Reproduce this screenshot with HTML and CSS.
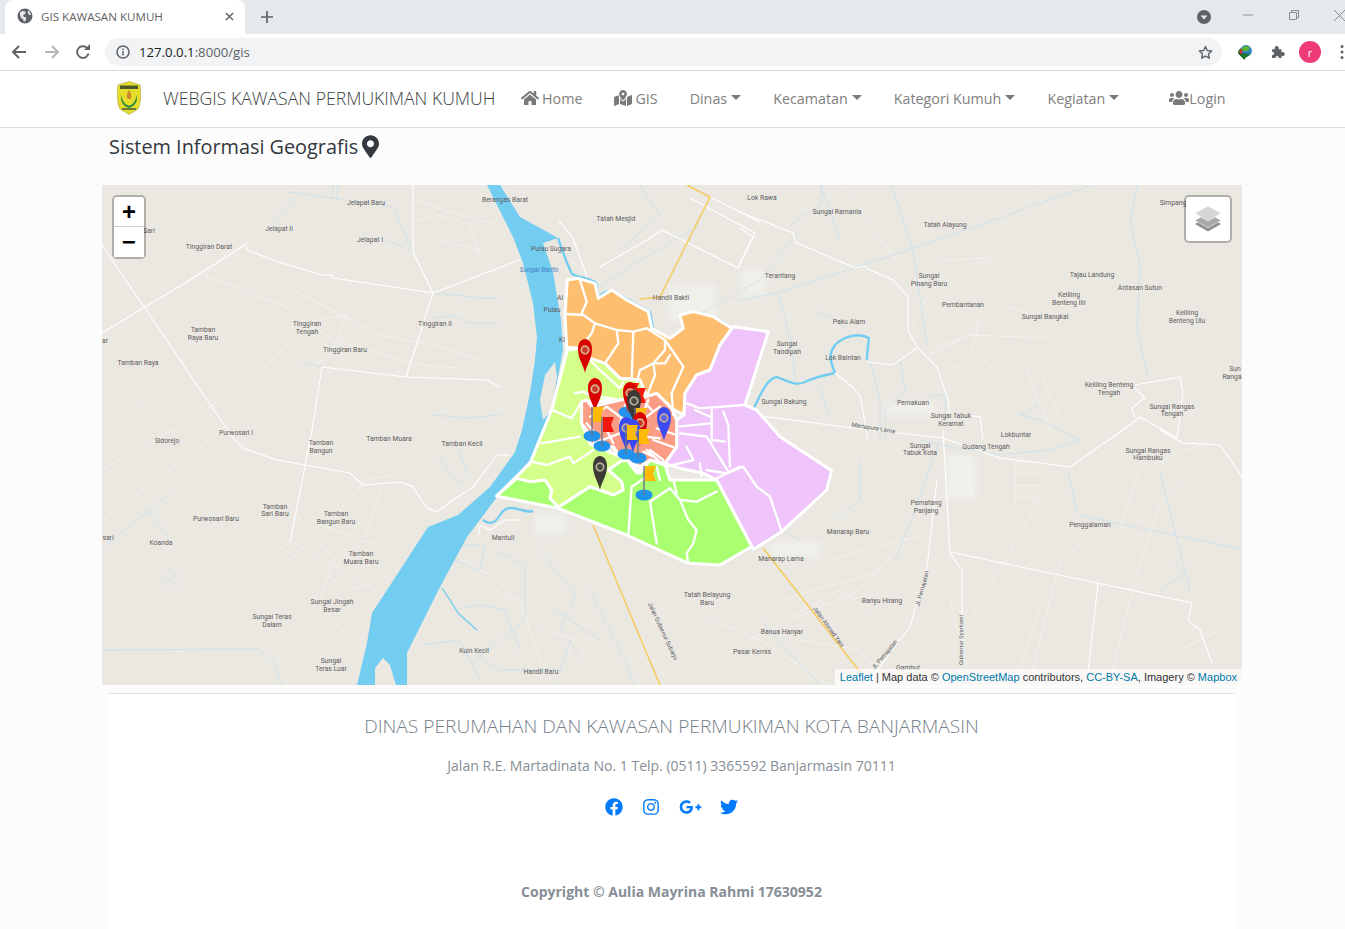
FILE: index.html
```html
<!DOCTYPE html>
<html lang="id">
<head>
<meta charset="utf-8">
<title>GIS KAWASAN KUMUH</title>
<link rel="stylesheet" href="styles.css">
</head>
<body>
<header class="chrome">
  <div class="tabstrip">
    <div class="tab">
      <svg class="favicon" viewBox="0 0 16 16"><circle cx="8" cy="8" r="7.5" fill="#5f6368"/><path d="M3 4l3-1 3 1-1 2-2 1 1 2 2 0 0 3-2 2-1-3-2-1-1-3zM11 2l2 2 1 3-2 0-1-2z" fill="#e6e9ec"/></svg>
      <span class="tab-title">GIS KAWASAN KUMUH</span>
      <svg class="tab-close" viewBox="0 0 10 10"><path d="M1 1l8 8M9 1l-8 8" stroke="#5f6368" stroke-width="1.6"/></svg>
    </div>
    <svg class="newtab" viewBox="0 0 12 12"><path d="M6 0v12M0 6h12" stroke="#5f6368" stroke-width="1.7"/></svg>
    <svg class="tabsearch" viewBox="0 0 14 14"><circle cx="7" cy="7" r="7" fill="#5f6368"/><path d="M3.6 5.4h6.8L7 9.6z" fill="#e6e9ec"/></svg>
    <svg class="win win-min" viewBox="0 0 10 10"><path d="M0 5h10" stroke="#8a8d91" stroke-width="1"/></svg>
    <svg class="win win-max" viewBox="0 0 10 10"><path d="M2.5 2.5V.5h7v7h-2M.5 2.5h7v7h-7z" fill="none" stroke="#8a8d91" stroke-width="1"/></svg>
    <svg class="win win-close" viewBox="0 0 11 11"><path d="M0 0l11 11M11 0L0 11" stroke="#8a8d91" stroke-width="1"/></svg>
  </div>
  <div class="toolbar">
    <svg class="tool tool-back" viewBox="0 0 16 16"><path d="M15 8H2M8 2L2 8l6 6" fill="none" stroke="#5f6368" stroke-width="1.9"/></svg>
    <svg class="tool tool-fwd" viewBox="0 0 16 16"><path d="M1 8h13M8 2l6 6-6 6" fill="none" stroke="#b4b6b9" stroke-width="1.9"/></svg>
    <svg class="tool tool-reload" viewBox="0 0 16 16"><path d="M13.5 9.5A5.8 5.8 0 1 1 12 4" fill="none" stroke="#5f6368" stroke-width="1.9"/><path d="M9 6h6V0z" fill="#5f6368"/></svg>
    <div class="omnibox">
      <svg class="info" viewBox="0 0 14 14"><circle cx="7" cy="7" r="6" fill="none" stroke="#5f6368" stroke-width="1.5"/><path d="M7 6v4.4M7 3.4v1.5" stroke="#5f6368" stroke-width="1.5"/></svg>
      <span class="url"><span class="url-host">127.0.0.1</span>:8000/gis</span>
      <svg class="star" viewBox="0 0 16 16"><path d="M8 1.6l1.9 4.3 4.7.5-3.5 3.1 1 4.6L8 11.8l-4.1 2.3 1-4.6-3.5-3.1 4.7-.5z" fill="none" stroke="#5f6368" stroke-width="1.5" stroke-linejoin="round"/></svg>
    </div>
    <svg class="ext-idm" viewBox="0 0 16 16"><circle cx="8.5" cy="6.5" r="5.5" fill="#2f7fc4"/><path d="M4 5c2-3 5-4 8-2l-1 3-4 1z" fill="#5cb531"/><path d="M1 9c0-3 1.500-5 3-5l1 5 4 0-2 6z" fill="#1b5e20"/><path d="M2 7l2-3 1 3-1 3z" fill="#d8342a"/><path d="M3 10l10-1-6 5z" fill="#1d7a2a"/></svg>
    <svg class="ext-puzzle" viewBox="0 0 512 512"><path fill="#5f6368" d="M64 170h90c-14-50 6-106 62-106s76 56 62 106h90v90c50-14 106 6 106 62s-56 76-106 62v64H280c10-34-14-62-50-62s-60 28-50 62H64V354c34 10 62-14 62-50s-28-60-62-50z"/></svg>
    <span class="avatar">r</span>
    <svg class="kebab" viewBox="0 0 4 16"><circle cx="2" cy="2.500" r="1.500" fill="#5f6368"/><circle cx="2" cy="8" r="1.500" fill="#5f6368"/><circle cx="2" cy="13.500" r="1.500" fill="#5f6368"/></svg>
  </div>
</header>

<nav class="navbar">
  <svg class="logo" viewBox="0 0 24 34">
    <path d="M12 .5L23 4c1 10 1 18-2 24l-9 5.500L3 28C0 22 0 14 1 4z" fill="#e6dc2a" stroke="#a8a53a" stroke-width=".6"/>
    <rect x="3" y="4.500" width="18" height="3.500" fill="#4a5a2a"/>
    <path d="M4.500 14c-1.500 6 1 11 7.500 13 6.500-2 9-7 7.500-13-.5 6-3.500 10-7.500 10.500C8 24 5 20 4.500 14z" fill="#2a8a3c"/>
    <path d="M12 9c-2 3-3 6-1.500 9h3C15 15 14 12 12 9z" fill="#c98a2a"/>
    <rect x="5" y="27" width="14" height="2" fill="#6d7a3a"/>
  </svg>
  <span class="brand">WEBGIS KAWASAN PERMUKIMAN KUMUH</span>
  <ul class="navlist">
    <li class="navitem"><svg class="fa fa-home" viewBox="0 0 576 512"><path d="M280.37 148.26L96 300.11V464a16 16 0 0 0 16 16l112.06-.29a16 16 0 0 0 15.92-16V368a16 16 0 0 1 16-16h64a16 16 0 0 1 16 16v95.64a16 16 0 0 0 16 16.05L464 480a16 16 0 0 0 16-16V300L295.67 148.26a12.19 12.19 0 0 0-15.3 0zM571.6 251.47L488 182.56V44.05a12 12 0 0 0-12-12h-56a12 12 0 0 0-12 12v72.61L318.47 43a48 48 0 0 0-61 0L4.34 251.47a12 12 0 0 0-1.6 16.9l25.5 31A12 12 0 0 0 45.15 301l235.22-193.74a12.19 12.19 0 0 1 15.3 0L530.9 301a12 12 0 0 0 16.9-1.6l25.5-31a12 12 0 0 0-1.7-16.93z"/></svg>Home</li>
    <li class="navitem"><svg class="fa fa-home" viewBox="0 0 576 512"><path d="M288 0c-69.59 0-126 56.41-126 126 0 56.26 82.35 158.8 113.9 196.02 6.39 7.54 17.82 7.54 24.2 0C331.65 284.8 414 182.26 414 126 414 56.41 357.59 0 288 0zm0 168c-23.2 0-42-18.8-42-42s18.8-42 42-42 42 18.8 42 42-18.8 42-42 42zM20.12 215.95A32.006 32.006 0 0 0 0 245.66v250.32c0 11.32 11.43 19.06 21.94 14.86L160 448V214.92c-8.84-15.98-16.07-31.54-21.25-46.42L20.12 215.95zM288 359.67c-14.07 0-27.38-6.18-36.51-16.96-19.66-23.2-40.57-49.62-59.49-76.72v182l192 64V266c-18.92 27.09-39.82 53.52-59.49 76.72-9.13 10.77-22.44 16.95-36.51 16.95zm266.06-198.51L416 224v288l139.88-55.95A31.996 31.996 0 0 0 576 426.34V176.02c0-11.32-11.43-19.06-21.94-14.86z"/></svg>GIS</li>
    <li class="navitem">Dinas<span class="caret"></span></li>
    <li class="navitem">Kecamatan<span class="caret"></span></li>
    <li class="navitem">Kategori Kumuh<span class="caret"></span></li>
    <li class="navitem">Kegiatan<span class="caret"></span></li>
    <li class="navitem navlogin"><svg class="fa fa-users" viewBox="0 0 640 512"><path d="M96 224c35.3 0 64-28.7 64-64s-28.7-64-64-64-64 28.7-64 64 28.7 64 64 64zm448 0c35.3 0 64-28.7 64-64s-28.7-64-64-64-64 28.7-64 64 28.7 64 64 64zm32 32h-64c-17.6 0-33.5 7.1-45.1 18.6 40.3 22.1 68.9 62 75.1 109.4h66c17.7 0 32-14.3 32-32v-32c0-35.3-28.7-64-64-64zm-256 0c61.9 0 112-50.1 112-112S381.9 32 320 32 208 82.1 208 144s50.1 112 112 112zm76.8 32h-8.3c-20.8 10-43.9 16-68.5 16s-47.6-6-68.5-16h-8.3C179.6 288 128 339.6 128 403.2V432c0 26.5 21.5 48 48 48h288c26.5 0 48-21.5 48-48v-28.8c0-63.6-51.6-115.2-115.2-115.2zm-223.7-13.4C161.5 263.1 145.6 256 128 256H64c-35.3 0-64 28.7-64 64v32c0 17.7 14.3 32 32 32h65.9c6.3-47.4 34.9-87.3 75.2-109.4z"/></svg>Login</li>
  </ul>
</nav>

<main class="main">
  <h1 class="title">Sistem Informasi Geografis<svg class="title-pin" viewBox="0 0 384 512"><path d="M172.268 501.67C26.97 291.031 0 262.577 0 192 0 85.961 85.961 0 192 0s192 85.961 192 192c0 70.577-26.97 99.031-172.268 309.67-9.535 13.774-29.93 13.773-39.464 0zM192 272c44.183 0 80-35.817 80-80s-35.817-80-80-80-80 35.817-80 80 35.817 80 80 80z"/></svg></h1>

  <section class="map">
    <svg class="map-svg" viewBox="102 185 1140 500">
      <defs>
        <g id="pin-red"><path d="M0 34C-1.500 26-7 20-7 10-7 3.500-3.500 0 0 0S7 3.500 7 10C7 20 1.500 26 0 34Z" fill="#d90000"/><circle cy="11" r="3.800" fill="#c93a2c" stroke="#d8b088" stroke-width="1.800"/></g>
        <g id="pin-blue"><path d="M0 34C-1.500 26-7 20-7 10-7 3.500-3.500 0 0 0S7 3.500 7 10C7 20 1.500 26 0 34Z" fill="#3a4af0"/><circle cy="11" r="3.800" fill="#5a66e0" stroke="#c2a8a0" stroke-width="1.800"/></g>
        <g id="pin-dark"><path d="M0 34C-1.500 26-7 20-7 10-7 3.500-3.500 0 0 0S7 3.500 7 10C7 20 1.500 26 0 34Z" fill="#3c3a34"/><circle cy="11" r="3.800" fill="#4a4840" stroke="#b0aca2" stroke-width="1.800"/></g>
        <g id="flag-y"><ellipse cy="29" rx="8.500" ry="5.500" fill="#2293ec"/><path d="M1 0h11l-3 7.500 3 7.500H1z" fill="#fdbb07"/><path d="M0 0v29" stroke="#6b7480" stroke-width="1.400"/></g>
        <g id="flag-r"><ellipse cy="29" rx="8.500" ry="5.500" fill="#2293ec"/><path d="M1 0h11l-3 7.500 3 7.500H1z" fill="#f4190e"/><path d="M0 0v29" stroke="#6b7480" stroke-width="1.400"/></g>
      </defs>

      <g class="base">
      <g class="faint">
        <polyline points="102,430 145,400 182,363 200,345"/><polyline points="102,470 190,420 250,380 315,320 347,315"/><polyline points="102,520 170,470 240,415 330,355 347,315"/>
        <polyline points="205,275 230,250 245,245 253,238"/>
        <polyline points="203,275 283,305 333,340 420,365 460,368"/><polyline points="293,290 380,335 433,345 480,360"/>
        <polyline points="413,222 440,215 470,225 480,260"/><polyline points="413,200 460,215 500,225"/><polyline points="440,240 480,250 500,278"/>
        <polyline points="284,500 335,560 320,600 340,630 370,650 385,665"/><polyline points="277,545 350,590 370,585"/><polyline points="280,535 375,590"/><polyline points="180,560 210,530 250,470"/><polyline points="132,600 160,640 190,660"/>
        <polyline points="310,520 360,540 378,545"/><polyline points="365,535 380,490 370,480"/><polyline points="333,520 365,480 395,475"/>
        <polyline points="460,560 500,580 520,610 540,630 580,640"/><polyline points="495,590 520,600 540,660 560,685"/>
        <polyline points="700,615 760,640 830,685"/><polyline points="670,685 640,640 660,610"/><polyline points="780,600 850,580 880,570"/><polyline points="830,560 900,540 930,535"/><polyline points="790,620 860,590 905,540"/>
        <polyline points="750,640 840,590 880,620"/><polyline points="800,640 860,650 875,670"/>
        <polyline points="970,620 1040,500 1060,470"/><polyline points="1030,680 1060,560 1100,530"/><polyline points="1110,680 1130,600 1160,500 1200,470"/><polyline points="1120,530 1140,470 1210,440"/>
        <polyline points="970,680 950,600"/><polyline points="1020,670 1040,610"/><polyline points="1180,650 1220,630"/>
        <polyline points="920,285 940,260 990,258 930,290 910,330"/><polyline points="930,350 970,335 1050,338"/><polyline points="970,355 980,320 960,340 930,355"/><polyline points="1006,305 1040,320"/>
        <polyline points="950,370 970,360 985,360 1000,375"/><polyline points="1025,365 1050,430"/><polyline points="1042,375 1060,420"/>
        <polyline points="845,185 880,240 898,262"/><polyline points="1030,185 1050,210"/>
      </g>
      <g class="tints">
        <rect x="947" y="456" width="28" height="42"/><rect x="668" y="285" width="48" height="36"/><rect x="770" y="542" width="50" height="16"/><rect x="535" y="512" width="32" height="22"/><rect x="885" y="402" width="50" height="14"/><rect x="740" y="270" width="26" height="26"/>
      </g>
      <g class="grid">
        <path d="M948 458h30M948 466h30M948 474h30M948 482h30M948 490h30M955 458v40M963 458v40M971 458v40M1015 462h25M1015 474h25M1015 486h25M1015 498h25M1015 462v40"/>
      </g>

      <g class="thin">
        <polyline points="288,192 347,200 393,207 413,252"/><polyline points="300,193 270,225"/><polyline points="333,185 333,198"/><polyline points="338,185 337,198"/><polyline points="383,238 413,252"/>
        <polyline points="433,293 480,298 500,298"/><polyline points="433,318 453,316 467,323 500,323"/><polyline points="302,362 322,367"/><polyline points="433,415 467,418 500,415"/>
        <polyline points="102,650 257,649 273,660 282,685"/><polyline points="102,548 172,492"/><polyline points="148,510 168,537"/><polyline points="167,568 179,577"/><polyline points="163,575 179,587"/><polyline points="160,580 170,587"/>
        <polyline points="437,455 458,483 467,473 457,447"/>
        <polyline points="441,555 480,570 485,545 460,545"/><polyline points="495,550 525,565 525,620 500,640 475,660"/><polyline points="450,610 480,605 505,610 520,650"/><polyline points="420,645 460,640 480,680"/><polyline points="470,650 500,670 560,670 570,640 580,660"/>
        <polyline points="540,550 575,595 560,630"/><polyline points="590,590 620,650 635,685"/><polyline points="555,610 600,640"/>
        <polyline points="1137,185 1130,223 1140,263 1137,330 1148,377"/><polyline points="1092,185 900,253 778,293"/><polyline points="892,185 913,250 927,347"/>
        <polyline points="1077,515 1242,549"/><polyline points="1068,472 1077,513"/><polyline points="1160,473 1190,590"/><polyline points="1175,560 1183,575 1160,590"/>
        <polyline points="778,293 792,345 795,382"/><polyline points="740,300 778,293"/><polyline points="822,185 820,205 790,225"/><polyline points="815,310 835,320 870,350"/>
        <polyline points="800,375 820,390 830,420"/><polyline points="870,360 880,400 880,440"/><polyline points="900,360 905,390 885,410 885,440"/><polyline points="930,395 945,395 945,420"/><polyline points="940,440 915,510 895,560"/>
        <polyline points="920,440 940,445 1000,455 1050,450 1080,440 1040,420 1020,415 1040,405"/>
        <polyline points="860,460 860,500 835,520"/><polyline points="740,480 760,520 800,540"/><polyline points="760,620 820,685"/>
        <polyline points="640,185 660,215 620,250"/><polyline points="700,225 640,260 580,300"/><polyline points="820,185 840,240"/><polyline points="690,320 760,280 800,230"/>
      </g>

      <polygon class="water" points="487,185 513,237 523,263 533,303 537,337 535,360 530,393 522,430 515,452 490,487 458,515 428,527 372,613 367,643 357,685 375,685 375,668 383,658 390,665 396,685 407,685 407,653 440,587 467,537 497,497 530,460 547,430 552,410 563,350 561,320 553,272 543,243 558,238 520,217 500,185"/>
      <polygon class="land" points="555,362 545,375 540,400 543,420 552,410 557,377"/>
      <path class="water-river" d="M558 238C562 250 566 262 572 274C580 278 590 278 596 283L598 297C604 292 608 290 614 292L650 312L653 328"/>
      <path class="water-river" d="M753 410C760 395 768 377 777 377C790 382 795 386 805 382C815 377 825 375 835 373C830 360 828 355 835 345C845 335 860 333 869 338C868 345 867 352 867 360"/>
      <path class="water-river" d="M483 520C490 526 496 522 500 515C506 505 515 508 522 510C528 512 530 512 533 511"/>
      <polyline class="water-thin" points="442,588 450,600 458,613 477,630"/>

      <g class="road">
        <polyline points="413,185 413,252 433,293 406,377"/>
        <polyline points="245,245 248,250 272,260 322,275 332,275 333,278 433,293"/>
        <polyline points="245,245 182,285 145,307 102,333"/>
        <polyline points="102,245 233,438 243,448 277,460 350,473 363,485 400,482 413,487 427,508 437,512 453,500 473,487 497,455 510,455"/>
        <polyline points="322,367 312,430 290,543"/>
        <polyline points="322,367 406,377 487,380 500,387"/>
        <polyline points="433,293 480,275 520,260"/>
        <polyline points="740,212 793,233 795,242 855,268 865,266 870,270 893,280 908,297 908,330 917,347 937,367 948,400 950,413 980,417 983,440"/>
        <polyline points="740,228 753,237 740,263"/>
        <polyline points="710,197 760,222"/>
        <polyline points="662,230 738,268 755,233 690,198"/>
        <polyline points="558,220 573,238 587,277"/>
        <polyline points="600,267 647,240 662,230"/>
        <polyline points="753,415 853,428 943,438 1000,458 1070,467 1123,430 1140,417 1177,438"/>
        <polyline points="1160,430 1183,443 1220,445 1242,477"/>
        <polyline points="1135,385 1180,377 1183,393 1177,438"/>
        <polyline points="1135,388 1145,398 1132,408 1135,418"/>
        <polyline points="867,362 893,365 917,348"/>
        <polyline points="835,373 850,385 860,395 868,440"/>
        <polyline points="943,430 950,553 962,570 962,663"/>
        <polyline points="950,552 1192,603 1188,620 1200,630 1212,663"/>
        <polyline points="1098,583 1088,673"/>
        <polyline points="937,480 927,567 910,627 897,643 867,685"/>
        <polyline points="480,525 490,530 505,520 520,520"/>
        <polyline points="478,537 480,526"/>
      </g>
      <g class="highway">
        <polyline points="687,185 710,197 660,297 640,299"/>
        <polyline points="593,525 660,685"/>
        <polyline points="763,548 860,672"/>
      </g>
      </g>

      <g transform="translate(480 260) scale(.33333)">
        <g class="districts">
          <polygon class="d-orange" points="262,60 295,55 345,70 355,115 395,90 440,120 505,155 515,205 570,235 610,205 600,165 640,155 700,170 755,205 720,255 690,330 650,345 615,400 612,465 575,445 530,400 500,410 480,360 420,355 375,310 330,295 300,265 260,262 255,165"/>
          <polygon class="d-purple" points="760,200 865,215 795,435 830,450 900,530 1055,632 1040,690 905,815 820,868 710,660 670,640 600,625 555,610 590,560 590,480 612,465 615,400 650,345 690,330 720,255"/>
          <polygon class="d-light" points="262,270 300,265 330,295 375,310 420,355 480,360 500,410 420,420 305,425 305,490 330,550 420,590 440,600 480,640 430,690 400,705 330,680 235,742 50,708 150,610 215,450"/>
          <polygon class="d-green" points="50,708 110,655 150,665 195,660 215,690 210,715 235,742 330,680 400,705 430,690 425,665 385,630 420,605 440,600 480,640 510,600 555,615 570,660 710,660 815,860 720,915 625,910 440,825 235,745"/>
          <polygon class="d-coral" points="305,425 320,420 335,440 420,420 500,410 530,400 575,445 590,480 590,560 555,610 510,600 480,620 440,600 420,590 400,560 345,560 330,550 320,510 305,490"/>
        </g>
        <g class="dlines">
          <polyline points="300,60 320,125 305,160"/>
          <polyline points="258,162 310,165 345,190 410,210 460,215 500,205"/>
          <polyline points="345,190 335,220 300,265"/>
          <polyline points="410,210 415,250 375,310"/>
          <polyline points="460,215 455,360"/>
          <polyline points="500,205 555,240 555,270 520,310 480,330 470,370"/>
          <polyline points="555,240 610,320 575,400 580,465"/>
          <polyline points="570,285 555,310 525,310"/>
          <polyline points="520,310 525,345 500,410"/>
          <polyline points="222,452 275,475 305,425"/>
          <polyline points="185,550 300,530"/>
          <polyline points="155,605 200,615 270,590 280,610 340,570"/>
          <polyline points="110,655 150,665 195,660 215,690 210,715 235,742"/>
          <polyline points="235,742 330,680 400,705 430,690 425,665 385,630 420,605"/>
          <polyline points="330,300 360,330 420,385 430,365"/>
          <polyline points="285,400 310,395 330,405 420,420"/>
          <polyline points="445,825 455,680 500,650"/>
          <polyline points="510,725 530,850"/>
          <polyline points="510,725 570,685 600,720 625,780 650,810 640,850 620,880 625,910"/>
          <polyline points="600,720 650,725 710,695"/>
          <polyline points="580,660 590,700"/>
          <polyline points="440,600 470,640 490,610"/>
          <polyline points="540,660 530,620"/>
          <polyline points="620,430 660,445 790,435"/>
          <polyline points="590,500 695,490"/>
          <polyline points="695,450 695,540 735,545"/>
          <polyline points="730,455 745,495 750,620"/>
          <polyline points="645,450 690,470"/>
          <polyline points="600,520 680,530 745,635"/>
          <polyline points="620,560 640,600 560,620"/>
          <polyline points="660,610 665,650"/>
          <polyline points="680,630 740,640 790,620 830,680 870,710 905,815"/>
          <polyline points="700,660 780,620"/>
          <polyline points="510,570 550,600"/>
          <polyline points="520,540 590,565"/>
          <polyline points="530,505 590,525"/>
          <polyline points="500,470 540,440"/>
          <polyline points="340,550 420,520"/>
          <polyline points="420,470 380,440 330,470"/>
          <polyline points="500,570 545,610"/>
          <polyline points="440,420 420,490"/>
          <polyline points="470,400 515,450"/>
          <polyline points="505,420 490,460"/>
          <polyline points="375,500 400,550"/>
          <polyline points="320,490 345,520"/>
          <polyline points="495,530 540,535"/>
          <polyline points="520,590 490,575"/>
        </g>
      </g>

      <use href="#flag-r" transform="translate(627 383)"/>
      <use href="#pin-red" transform="translate(630 382)"/>
      <use href="#flag-r" transform="translate(634 388)"/>
      <use href="#pin-dark" transform="translate(634 390)"/>
      <use href="#flag-y" transform="translate(635 408)"/>
      <use href="#pin-red" transform="translate(640 412)"/>
      <use href="#pin-red" transform="translate(585 339)"/>
      <use href="#pin-red" transform="translate(595 378)"/>
      <use href="#flag-y" transform="translate(592 407)"/>
      <use href="#flag-r" transform="translate(602 417)"/>
      <use href="#pin-blue" transform="translate(633 419)"/>
      <use href="#pin-blue" transform="translate(626 417)"/>
      <use href="#flag-y" transform="translate(626 425)"/>
      <use href="#flag-y" transform="translate(638 429)"/>
      <use href="#pin-blue" transform="translate(664 407)"/>
      <use href="#pin-dark" transform="translate(600 456)"/>
      <use href="#flag-y" transform="translate(644 466)"/>

      <g class="labels">
        <text x="366" y="205">Jelapat Baru</text><text x="279" y="231">Jelapat Ii</text><text x="370" y="242">Jelapat I</text><text x="209" y="249">Tinggiran Darat</text><text x="149" y="233">Sari</text>
        <text x="203" y="332">Tamban</text><text x="203" y="340">Raya Baru</text><text x="307" y="326">Tinggiran</text><text x="307" y="334">Tengah</text><text x="435" y="326">Tinggiran II</text><text x="345" y="352">Tinggiran Baru</text><text x="138" y="365">Tamban Raya</text><text x="105" y="343">ar</text>
        <text x="167" y="443">Sidorejo</text><text x="236" y="435">Purwosari I</text><text x="321" y="445">Tamban</text><text x="321" y="453">Bangun</text><text x="389" y="441">Tamban Muara</text><text x="462" y="446">Tamban Kecil</text>
        <text x="275" y="509">Tamban</text><text x="275" y="516">Sari Baru</text><text x="336" y="516">Tamban</text><text x="336" y="524">Bangun Baru</text><text x="216" y="521">Purwosari Baru</text><text x="161" y="545">Koanda</text><text x="108" y="540">sari</text>
        <text x="361" y="556">Tamban</text><text x="361" y="564">Muara Baru</text><text x="332" y="604">Sungai Jingah</text><text x="332" y="612">Besar</text><text x="272" y="619">Sungai Teras</text><text x="272" y="627">Dalam</text><text x="331" y="663">Sungai</text><text x="331" y="671">Teras Luar</text>
        <text x="503" y="540">Mantuil</text><text x="474" y="653">Kuin Kecil</text><text x="541" y="674">Handil Baru</text><text x="505" y="202">Berangas Barat</text><text x="616" y="221">Tatah Mesjid</text><text x="551" y="251">Pulau Sugara</text><text class="lbl-water" x="539" y="272">Sungai Barito</text>
        <text x="671" y="300">Handil Bakti</text><text x="552" y="312">Pulau</text><text x="560" y="300">Al</text><text x="562" y="342">Ki</text>
        <text x="780" y="278">Terantang</text><text x="762" y="200">Lok Rawa</text><text x="837" y="214">Sungai Ramania</text><text x="945" y="227">Tatah Alayung</text><text x="929" y="278">Sungai</text><text x="929" y="286">Pinang Baru</text><text x="963" y="307">Pembantanan</text><text x="849" y="324">Paku Alam</text>
        <text x="787" y="346">Sungai</text><text x="787" y="354">Tandipah</text><text x="843" y="360">Lok Baintan</text><text x="784" y="404">Sungai Bakung</text><text x="913" y="405">Pemakuan</text><text x="951" y="418">Sungai Tabuk</text><text x="951" y="426">Keramat</text>
        <text x="1092" y="277">Tajau Landung</text><text x="1140" y="290">Antasan Sutun</text><text x="1069" y="297">Keliling</text><text x="1069" y="305">Benteng Ilir</text><text x="1045" y="319">Sungai Bangkal</text><text x="1187" y="315">Keliling</text><text x="1187" y="323">Benteng Ulu</text>
        <text x="1109" y="387">Keliling Benteng</text><text x="1109" y="395">Tengah</text><text x="1172" y="409">Sungai Rangas</text><text x="1172" y="416">Tengah</text><text x="1235" y="371">Sun</text><text x="1232" y="379">Ranga</text><text x="1173" y="205">Simpang</text>
        <text x="1016" y="437">Lokbuntar</text><text x="986" y="449">Gudang Tengah</text><text x="920" y="448">Sungai</text><text x="920" y="455">Tabuk Kota</text><text x="1148" y="453">Sungai Rangas</text><text x="1148" y="460">Hambuku</text>
        <text x="926" y="505">Pematang</text><text x="926" y="513">Panjang</text><text x="848" y="534">Manarap Baru</text><text x="1090" y="527">Penggalaman</text><text x="781" y="561">Manarap Lama</text><text x="882" y="603">Banyu Hirang</text><text x="782" y="634">Banua Hanyar</text><text x="752" y="654">Pasar Kemis</text>
        <text x="707" y="597">Tatah Belayung</text><text x="707" y="605">Baru</text><text x="908" y="670">Gambut</text>
        <text class="lbl-road" transform="translate(873 430) rotate(9)">Martapura Lama</text>
        <text class="lbl-road" transform="translate(924 589) rotate(-75)">Jl. Pemajatan</text>
        <text class="lbl-road" transform="translate(886 656) rotate(-50)">Jl. Pemajatan</text>
        <text class="lbl-road" transform="translate(963 640) rotate(-90)">Gubernur Syarkawi</text>
        <text class="lbl-road" transform="translate(827 628) rotate(54)">Jalan Ahmad Yani</text>
        <text class="lbl-road" transform="translate(661 632) rotate(65)">Jalan Gubernur Subarjo</text>
      </g>
    </svg>

    <div class="zoom-ctl">
      <span class="zoom-btn zoom-in">+</span>
      <span class="zoom-btn">&#8722;</span>
    </div>
    <div class="layers-ctl">
      <svg class="layers-icon" viewBox="0 0 26 26">
        <path d="M13 10.500l13 7.500-13 7.500L0 18z" fill="#8f8f8f"/>
        <path d="M13 7l13 7.500L13 22 0 14.500z" fill="#a8a8a8" stroke="#f5f5f5" stroke-width=".6"/>
        <path d="M13 0l13 7.500L13 15 0 7.500z" fill="#d6d6d6" stroke="#f5f5f5" stroke-width=".6"/>
      </svg>
    </div>
    <div class="attrib"><a class="link">Leaflet</a> | Map data © <a class="link">OpenStreetMap</a> contributors, <a class="link">CC-BY-SA</a>, Imagery © <a class="link">Mapbox</a></div>
  </section>

  <footer class="footer">
    <h2 class="foot-title">DINAS PERUMAHAN DAN KAWASAN PERMUKIMAN KOTA BANJARMASIN</h2>
    <p class="foot-addr">Jalan R.E. Martadinata No. 1 Telp. (0511) 3365592 Banjarmasin 70111</p>
    <div class="socials">
      <svg class="soc soc-fb" viewBox="0 0 512 512"><path d="M504 256C504 119 393 8 256 8S8 119 8 256c0 123.780 90.690 226.380 209.250 245V327.690h-63V256h63v-54.640c0-62.150 37-96.480 93.670-96.480 27.140 0 55.520 4.840 55.520 4.840v61h-31.280c-30.800 0-40.410 19.120-40.410 38.730V256h68.780l-11 71.690h-57.780V501C413.310 482.380 504 379.780 504 256z"/></svg>
      <svg class="soc soc-ig" viewBox="0 0 448 512"><path d="M224.100 141c-63.600 0-114.900 51.300-114.900 114.900s51.300 114.900 114.900 114.900S339 319.500 339 255.900 287.700 141 224.100 141zm0 189.600c-41.100 0-74.700-33.500-74.700-74.700s33.500-74.700 74.700-74.700 74.700 33.500 74.700 74.700-33.600 74.700-74.700 74.700zm146.400-194.300c0 14.900-12 26.800-26.800 26.800-14.900 0-26.800-12-26.800-26.800s12-26.800 26.800-26.800 26.800 12 26.800 26.800zm76.100 27.200c-1.700-35.900-9.900-67.700-36.200-93.900-26.200-26.200-58-34.400-93.900-36.200-37-2.100-147.900-2.100-184.900 0-35.800 1.700-67.600 9.900-93.900 36.100s-34.400 58-36.200 93.900c-2.100 37-2.100 147.900 0 184.900 1.700 35.900 9.900 67.700 36.200 93.900s58 34.400 93.900 36.200c37 2.100 147.900 2.100 184.900 0 35.900-1.700 67.700-9.900 93.900-36.200 26.200-26.200 34.400-58 36.200-93.900 2.100-37 2.100-147.800 0-184.800zM398.800 388c-7.800 19.600-22.900 34.700-42.600 42.600-29.500 11.700-99.500 9-132.100 9s-102.700 2.600-132.100-9c-19.600-7.800-34.700-22.900-42.600-42.600-11.700-29.500-9-99.500-9-132.100s-2.600-102.700 9-132.100c7.800-19.600 22.900-34.700 42.600-42.600 29.500-11.700 99.500-9 132.100-9s102.700-2.600 132.100 9c19.600 7.800 34.700 22.900 42.600 42.600 11.700 29.500 9 99.500 9 132.100s2.700 102.700-9 132.100z"/></svg>
      <svg class="soc soc-gp" viewBox="0 0 640 512"><path d="M386.061 228.496c1.834 9.692 3.143 19.384 3.143 31.956C389.204 370.205 315.599 448 204.800 448c-106.084 0-192-85.915-192-192s85.916-192 192-192c51.864 0 95.083 18.859 128.611 50.292l-52.126 50.030c-14.145-13.621-39.028-29.599-76.485-29.599-65.484 0-118.920 54.221-118.920 121.277 0 67.056 53.436 121.277 118.920 121.277 75.961 0 104.513-54.745 108.965-82.773H204.800v-66.009h181.261zm185.406 6.437V179.200h-56.001v55.733h-55.733v56.001h55.733v55.733h56.001v-55.733H627.200v-56.001h-55.733z"/></svg>
      <svg class="soc soc-tw" viewBox="0 0 512 512"><path d="M459.370 151.716c.325 4.548.325 9.097.325 13.645 0 138.720-105.583 298.558-298.558 298.558-59.452 0-114.680-17.219-161.137-47.106 8.447.974 16.568 1.299 25.340 1.299 49.055 0 94.213-16.568 130.274-44.832-46.132-.975-84.792-31.188-98.112-72.772 6.498.974 12.995 1.624 19.818 1.624 9.421 0 18.843-1.300 27.614-3.573-48.081-9.747-84.143-51.980-84.143-102.985v-1.299c13.969 7.797 30.214 12.670 47.431 13.319-28.264-18.843-46.781-51.005-46.781-87.391 0-19.492 5.197-37.360 14.294-52.954 51.655 63.675 129.300 105.258 216.365 109.807-1.624-7.797-2.599-15.918-2.599-24.040 0-57.828 46.782-104.934 104.934-104.934 30.213 0 57.502 12.670 76.670 33.137 23.715-4.548 46.456-13.320 66.599-25.340-7.798 24.366-24.366 44.833-46.132 57.827 21.117-2.273 41.584-8.122 60.426-16.243-14.292 20.791-32.161 39.308-52.628 54.253z"/></svg>
    </div>
    <p class="copyright">Copyright © Aulia Mayrina Rahmi 17630952</p>
  </footer>
</main>
</body>
</html>
```

FILE: styles.css
```css
* { box-sizing: border-box; }
html, body { margin: 0; padding: 0; height: 929px; overflow: hidden; }
body { background: #fcfcfc; font-family: "Open Sans", "Noto Sans", sans-serif; color: #212529; }

/* browser chrome */
.chrome { background: #fff; }
.tabstrip { height: 34px; background: #e6e9ec; display: flex; align-items: center; padding-left: 5px; }
.tab { width: 240px; height: 34px; background: #fff; border-radius: 8px 8px 0 0; display: flex; align-items: center; padding: 0 11px 2px 12px; }
.favicon { width: 16px; height: 16px; margin-right: 8px; flex: none; }
.tab-title { font-size: 11.6px; color: #5f6368; flex: 1; white-space: nowrap; }
.tab-close { width: 9px; height: 9px; }
.newtab { width: 12px; height: 12px; margin-left: 16px; }
.tabsearch { width: 14px; height: 14px; margin-left: 924px; }
.win { flex: none; }
.win-min { width: 10px; height: 10px; margin-left: 32px; margin-top: -4px; }
.win-max { width: 10px; height: 10px; margin-left: 36px; margin-top: -4px; }
.win-close { width: 11px; height: 11px; margin-left: 35px; margin-top: -4px; }
.toolbar { height: 37px; border-bottom: 1px solid #d9d9d9; display: flex; align-items: center; padding-left: 11px; }
.tool { width: 16px; height: 16px; flex: none; }
.tool-fwd { margin-left: 17px; }
.tool-reload { margin-left: 15px; }
.omnibox { width: 1117px; height: 28px; margin-left: 14px; background: #f1f3f4; border-radius: 14px; display: flex; align-items: center; padding: 0 9px 0 11px; }
.info { width: 14px; height: 14px; flex: none; }
.url { font-size: 13.2px; color: #5f6368; margin-left: 9px; flex: 1; }
.url-host { color: #202124; }
.star { width: 15px; height: 15px; }
.ext-idm { width: 17px; height: 17px; margin-left: 15px; }
.ext-puzzle { width: 16px; height: 16px; margin-left: 16px; }
.avatar { width: 22px; height: 22px; margin-left: 13px; border-radius: 50%; background: #ee3b77; color: #fff; font-size: 11px; display: flex; align-items: center; justify-content: center; flex: none; }
.kebab { width: 4px; height: 16px; margin-left: 19px; flex: none; }

/* navbar */
.navbar { height: 57px; background: #fff; border-bottom: 1px solid #dcdcdc; display: flex; align-items: center; padding: 0 0 2px 117px; }
.logo { width: 24px; height: 34px; flex: none; }
.brand { font-weight: 300; font-size: 17.65px; color: #3a3f44; margin-left: 22px; white-space: nowrap; width: 333px; }
.navlist { list-style: none; margin: 0 0 0 25px; padding: 0; display: flex; gap: 32px; }
.navitem { font-size: 14.3px; color: #808080; display: flex; align-items: center; white-space: nowrap; }
.navlogin { margin-left: 18px; }
.fa { fill: #7a7a7a; height: 16px; flex: none; }
.fa-home { width: 18px; margin-right: 3px; }
.fa-users { width: 20px; }
.caret { width: 0; height: 0; margin-left: 4px; margin-top: -2px; border-top: 5px solid #7a7a7a; border-left: 5px solid transparent; border-right: 5px solid transparent; }

/* main */
.main { display: flex; flex-direction: column; margin-left: 102px; width: 1140px; }
.title { height: 57px; margin: 0; padding: 5px 0 0 7px; font-size: 19.85px; font-weight: 400; color: #32373c; display: flex; align-items: flex-start; line-height: 27px; }
.title-pin { width: 17px; height: 23px; margin-left: 4px; margin-top: 2px; fill: #343a40; }

/* map */
.map { position: relative; width: 1140px; height: 500px; background: #ebe8e2; overflow: hidden; }
.map-svg { display: block; width: 1140px; height: 500px; }
.base { filter: blur(.35px); }
.faint polyline { fill: none; stroke: #f4f2ee; stroke-width: .9; }
.tints { filter: blur(3px); }
.tints rect { fill: #f0efea; }
.grid path { fill: none; stroke: #f5f4f0; stroke-width: .8; }
.thin polyline { fill: none; stroke: #c8e0ee; stroke-width: .8; }
.road polyline { fill: none; stroke: #fff; stroke-width: 1.1; }
.highway polyline { fill: none; stroke: #f6ca5c; stroke-width: 1.500; }
.water { fill: #72cdf1; }
.land { fill: #ebe8e2; }
.water-river { fill: none; stroke: #72cdf1; stroke-width: 2.400; stroke-linejoin: round; }
.water-thin { fill: none; stroke: #72cdf1; stroke-width: 1.300; }
.districts polygon { stroke: #fff; stroke-width: 9; stroke-linejoin: round; }
.d-orange { fill: #fdbf6f; }
.d-purple { fill: #efc4fb; }
.d-light { fill: #d4ff8a; }
.d-green { fill: #a9ff70; }
.d-coral { fill: #fb9c84; }
.dlines polyline { fill: none; stroke: #fff; stroke-width: 7; stroke-linejoin: round; stroke-linecap: round; }
.labels text { font-family: Roboto, "Liberation Sans", sans-serif; font-size: 6.8px; fill: #5c5c5d; text-anchor: middle; }
.labels .lbl-water { fill: #3f7fc4; font-style: italic; }
.labels .lbl-road { font-size: 6px; fill: #55575a; }

.zoom-ctl { position: absolute; left: 10px; top: 10px; width: 34px; border: 2px solid rgba(0,0,0,.25); border-radius: 5px; background-clip: padding-box; display: flex; flex-direction: column; }
.zoom-btn { height: 30px; width: 30px; background: #fff; color: #000; font: bold 24px/33px "Liberation Mono", monospace; text-align: center; }
.zoom-in { border-bottom: 1px solid #ccc; border-radius: 3px 3px 0 0; }
.layers-ctl { position: absolute; left: 1082px; top: 10px; width: 48px; height: 48px; background: #fff; border: 2px solid rgba(0,0,0,.25); border-radius: 5px; background-clip: padding-box; display: flex; align-items: center; justify-content: center; }
.layers-icon { width: 26px; height: 26px; }
.attrib { position: absolute; right: 0; bottom: 0; height: 16px; padding: 0 5px; background: rgba(255,255,255,.7); font: 11px/16px "Liberation Sans", Arial, sans-serif; color: #333; white-space: nowrap; }
.link { color: #0078a8; }

/* footer */
.footer { margin: 8px 0 0 7px; width: 1125px; height: 236px; background: #fff; border-top: 1px solid #dedede; display: flex; flex-direction: column; align-items: center; }
.foot-title { margin: 20px 0 0; font-size: 19.17px; font-weight: 300; color: #76808a; line-height: 25px; white-space: nowrap; }
.foot-addr { margin: 17px 0 0; font-size: 14px; color: #868e96; line-height: 19px; }
.socials { display: flex; margin-top: 22px; align-items: center; height: 20px; }
.soc { height: 18px; fill: #007bff; flex: none; }
.soc-fb { width: 18px; }
.soc-ig { width: 16px; margin-left: 20px; }
.soc-gp { width: 23px; margin-left: 20px; }
.soc-tw { width: 18px; margin-left: 18px; }
.copyright { margin: 65px 0 0; font-size: 14px; font-weight: 700; color: #868e96; line-height: 19px; }
```
